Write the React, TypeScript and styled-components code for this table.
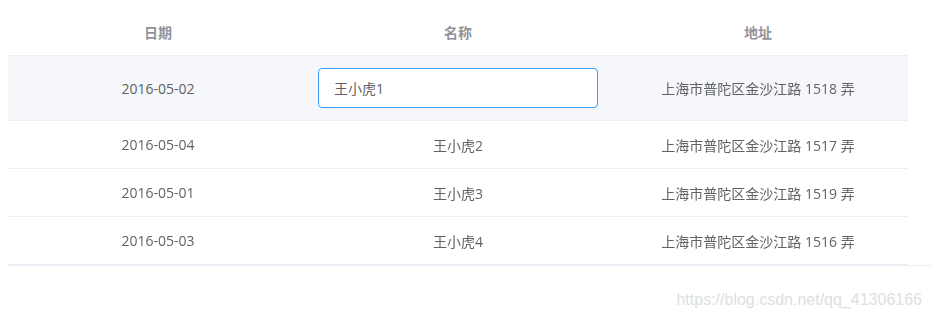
import { useEffect, useRef } from 'react';
import styled, { createGlobalStyle } from 'styled-components';

const GlobalStyle = createGlobalStyle`
  body {
    margin: 8px 0 0 8px;
    background: #fff;
    font-family: "Open Sans", "Noto Sans CJK SC", sans-serif;
  }
`;

const Page = styled.div`
  position: relative;
  height: 309px;
`;

const TableWrap = styled.div`
  width: 100%;
  border-bottom: 1px solid #ebeef5;
`;

const Table = styled.table`
  width: 900px;
  border-collapse: collapse;
  table-layout: fixed;
  font-size: 14px;
  color: #606266;
`;

const Th = styled.th`
  height: 47px;
  padding: 0 10px;
  text-align: center;
  font-weight: bold;
  color: #909399;
  border-bottom: 1px solid #ebeef5;
`;

const Row = styled.tr<{ $active?: boolean }>`
  background: ${({ $active }) => ($active ? '#f5f7fa' : '#fff')};
`;

const Td = styled.td<{ $tall?: boolean }>`
  height: ${({ $tall }) => ($tall ? '64px' : '47px')};
  padding: 0 10px;
  text-align: center;
  border-bottom: 1px solid #ebeef5;
`;

const Input = styled.input`
  display: block;
  box-sizing: border-box;
  width: 100%;
  height: 40px;
  padding: 0 15px;
  border: 1px solid #409eff;
  border-radius: 4px;
  outline: none;
  background: #fff;
  font: inherit;
  font-size: 14px;
  color: #606266;
  caret-color: #303133;
`;

const Watermark = styled.div`
  position: absolute;
  right: 10px;
  top: 283px;
  font-family: "Liberation Sans", Arial, sans-serif;
  font-size: 16px;
  color: #e0e0e0;
`;

const ROWS = [
  { date: '2016-05-02', name: '王小虎1', address: '上海市普陀区金沙江路 1518 弄', editing: true },
  { date: '2016-05-04', name: '王小虎2', address: '上海市普陀区金沙江路 1517 弄' },
  { date: '2016-05-01', name: '王小虎3', address: '上海市普陀区金沙江路 1519 弄' },
  { date: '2016-05-03', name: '王小虎4', address: '上海市普陀区金沙江路 1516 弄' },
];

function NameEditor({ value }: { value: string }) {
  const ref = useRef<HTMLInputElement>(null);

  useEffect(() => {
    const el = ref.current;
    if (!el) return;
    el.focus();
    el.setSelectionRange(value.length, value.length);
  }, [value]);

  return <Input ref={ref} defaultValue={value} />;
}

export default function App() {
  return (
    <Page>
      <GlobalStyle />
      <TableWrap>
        <Table>
          <thead>
            <tr>
              <Th>日期</Th>
              <Th>名称</Th>
              <Th>地址</Th>
            </tr>
          </thead>
          <tbody>
            {ROWS.map(({ date, name, address, editing }) => (
              <Row key={date} $active={editing}>
                <Td $tall={editing}>{date}</Td>
                <Td $tall={editing}>{editing ? <NameEditor value={name} /> : name}</Td>
                <Td $tall={editing}>{address}</Td>
              </Row>
            ))}
          </tbody>
        </Table>
      </TableWrap>
      <Watermark>https://blog.csdn.net/qq_41306166</Watermark>
    </Page>
  );
}
